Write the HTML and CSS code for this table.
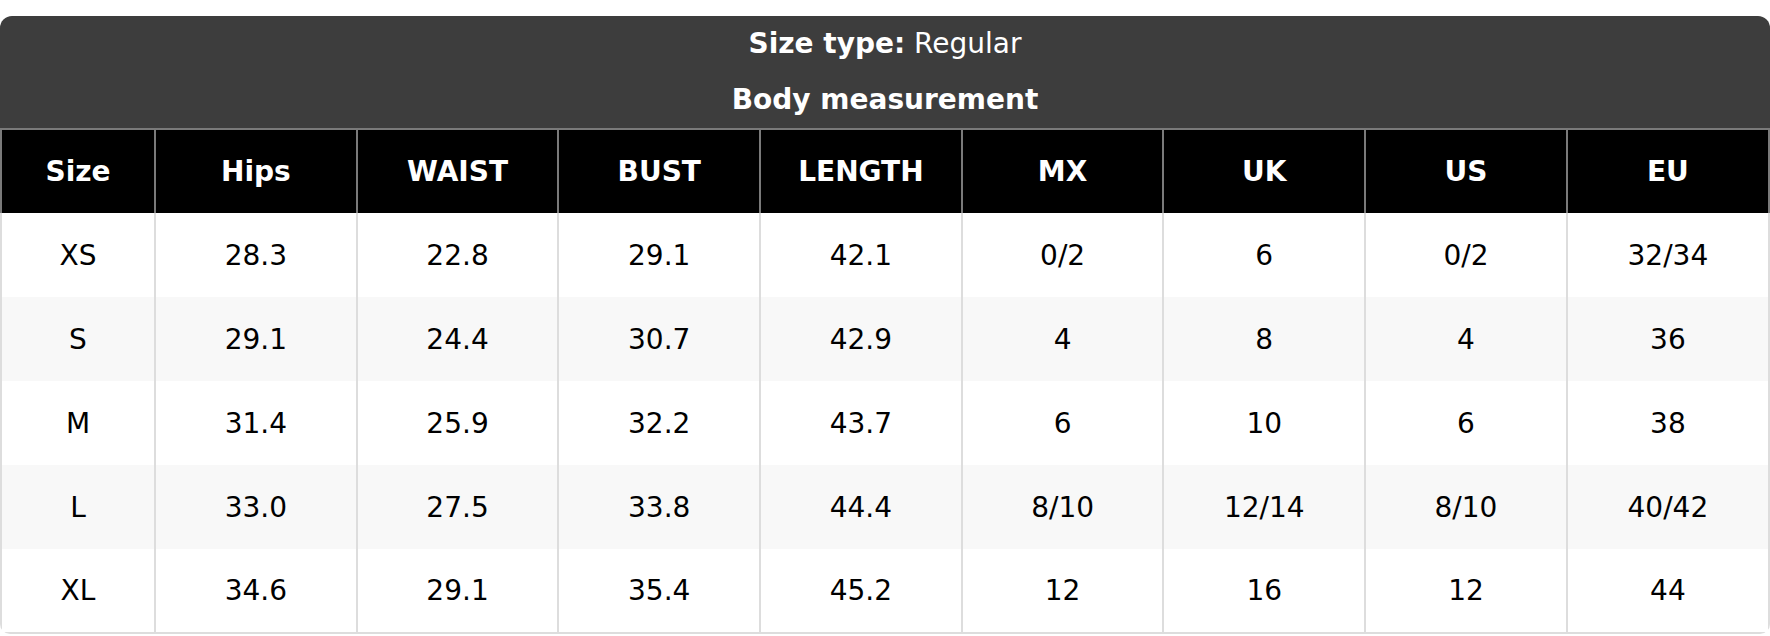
FILE: index.html
```html
<!DOCTYPE html>
<html lang="en">
<head>
<meta charset="utf-8">
<title>Size chart</title>
<link rel="stylesheet" href="styles.css">
</head>
<body>
<div class="chart">
  <div class="caption">
    <div class="caption-line"><strong>Size type:</strong> Regular</div>
    <div class="caption-line caption-title">Body measurement</div>
  </div>
  <table class="sizes">
    <colgroup>
      <col class="col-first">
      <col class="col-mid"><col class="col-mid"><col class="col-mid"><col class="col-mid"><col class="col-mid"><col class="col-mid"><col class="col-mid"><col>
    </colgroup>
    <thead>
      <tr>
        <th>Size</th><th>Hips</th><th>WAIST</th><th>BUST</th><th>LENGTH</th><th>MX</th><th>UK</th><th>US</th><th>EU</th>
      </tr>
    </thead>
    <tbody>
      <tr><td>XS</td><td>28.3</td><td>22.8</td><td>29.1</td><td>42.1</td><td>0/2</td><td>6</td><td>0/2</td><td>32/34</td></tr>
      <tr><td>S</td><td>29.1</td><td>24.4</td><td>30.7</td><td>42.9</td><td>4</td><td>8</td><td>4</td><td>36</td></tr>
      <tr><td>M</td><td>31.4</td><td>25.9</td><td>32.2</td><td>43.7</td><td>6</td><td>10</td><td>6</td><td>38</td></tr>
      <tr><td>L</td><td>33.0</td><td>27.5</td><td>33.8</td><td>44.4</td><td>8/10</td><td>12/14</td><td>8/10</td><td>40/42</td></tr>
      <tr><td>XL</td><td>34.6</td><td>29.1</td><td>35.4</td><td>45.2</td><td>12</td><td>16</td><td>12</td><td>44</td></tr>
    </tbody>
  </table>
</div>
</body>
</html>
```
FILE: styles.css
```css
html, body {
  margin: 0;
  padding: 0;
  background: #ffffff;
}
body {
  font-family: "DejaVu Sans", Verdana, sans-serif;
  font-size: 28px;
  color: #000000;
}
.chart {
  margin-top: 16px;
  width: 1770px;
  border-radius: 12px 12px 10px 10px;
  overflow: hidden;
  background: #ffffff;
}
.caption {
  background: #3d3d3d;
  color: #ffffff;
  text-align: center;
}
.caption-line {
  height: 56px;
  line-height: 56px;
}
.caption-line strong,
.caption-title {
  font-weight: bold;
}
.sizes {
  width: 100%;
  border-collapse: collapse;
  table-layout: fixed;
}
.col-first {
  width: 154px;
}
.col-mid {
  width: 201.7px;
}
.sizes th {
  background: #000000;
  color: #ffffff;
  font-weight: bold;
  height: 83px;
  padding: 0;
  text-align: center;
  vertical-align: middle;
  border: 2px solid #7a7a7a;
  border-bottom: none;
}
.sizes td {
  height: 84px;
  padding: 0;
  text-align: center;
  vertical-align: middle;
  border-left: 2px solid #dddddd;
  border-right: 2px solid #dddddd;
}
.sizes tbody tr:nth-child(even) td {
  background: #f8f8f8;
}
.sizes tbody tr:last-child td {
  height: 83px;
  border-bottom: 2px solid #dddddd;
}
```
